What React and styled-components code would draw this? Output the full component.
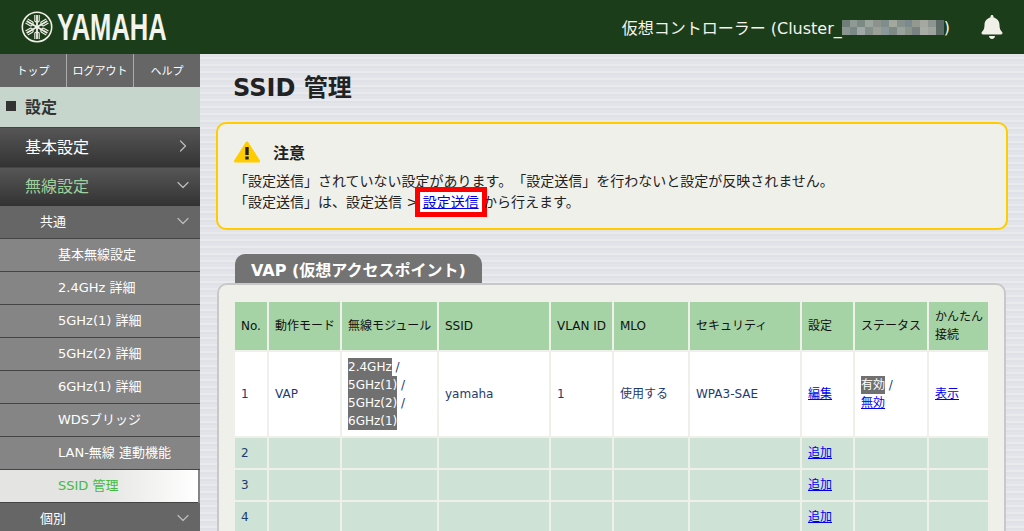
import React from "react";
import styled, { createGlobalStyle } from "styled-components";
import { ChevronDown, ChevronRight } from "lucide-react";
import { FaBell } from "react-icons/fa";

const FONT = `"DejaVu Sans", "Noto Sans CJK JP", sans-serif`;

const MOSAIC = [
	"#6f7f78", "#8f9a94", "#7c8a86", "#9aa5a0", "#8d938c", "#7f8d8c", "#a3a89f", "#86908c", "#7b8a8f", "#93998f", "#a5a8a0", "#8d9590", "#5d6a68",
	"#8a9590", "#7a8886", "#a0a8a6", "#858f8a", "#9a9f98", "#8b9899", "#7f8a86", "#9aa29c", "#8a9488", "#7a8284", "#a8aca6", "#9ea39e", "#5e6c68",
];

function Emblem() {
	return (
		<svg width="32" height="32" viewBox="0 0 32 32" fill="none" stroke="#f0f0e8">
			<circle cx="16" cy="16" r="14.7" strokeWidth="1.6" />
			{[0, 60, 120, 180, 240, 300].map((a) => (
				<g key={a} transform={`rotate(${a} 16 16)`}>
					<path d="M16 16V4" strokeWidth="1.8" />
					<path d="M13.800 4V9.500Q13.800 11 16 11Q18.200 11 18.200 9.500V4" strokeWidth="1.1" />
				</g>
			))}
		</svg>
	);
}

function Warning() {
	return (
		<svg width="26" height="22" viewBox="0 0 26 22">
			<path d="M13 2L24.500 20H1.500Z" fill="#ffcc00" stroke="#ffcc00" strokeWidth="3" strokeLinejoin="round" />
			<rect x="11.300" y="6" width="3.400" height="8" fill="#222" />
			<rect x="11.300" y="15.500" width="3.400" height="3" fill="#222" />
		</svg>
	);
}

const SUB_ITEMS = ["基本無線設定", "2.4GHz 詳細", "5GHz(1) 詳細", "5GHz(2) 詳細", "6GHz(1) 詳細", "WDSブリッジ", "LAN-無線 連動機能"];

const COLUMNS = [32, 71, 95, 110, 61, 74, 110, 51, 72, 59];
const HEADERS = ["No.", "動作モード", "無線モジュール", "SSID", "VLAN ID", "MLO", "セキュリティ", "設定", "ステータス", "かんたん接続"];

export default function App() {
	return (
		<>
			<GlobalStyle />
			<Page>
				<Header>
					<Logo>
						<Emblem />
						<LogoText>YAMAHA</LogoText>
					</Logo>
					<Controller>
						仮想コントローラー (Cluster_
						<Mosaic>
							{MOSAIC.map((c, i) => (
								<MosaicCell key={i} $color={c} />
							))}
						</Mosaic>
						)
					</Controller>
					<Bell>
						<FaBell size={24} />
					</Bell>
				</Header>
				<Body>
					<Sidebar>
						<TopNav>
							<TopLink>トップ</TopLink>
							<TopLink>ログアウト</TopLink>
							<TopLink>ヘルプ</TopLink>
						</TopNav>
						<SectionHead>
							<Square />
							設定
						</SectionHead>
						<MainItem>
							基本設定
							<ChevronRight size={20} strokeWidth={1.5} />
						</MainItem>
						<MainItem $open>
							無線設定
							<ChevronDown size={20} strokeWidth={1.5} />
						</MainItem>
						<GroupItem>
							共通
							<ChevronDown size={20} strokeWidth={1.5} />
						</GroupItem>
						{SUB_ITEMS.map((item) => (
							<SubItem key={item}>{item}</SubItem>
						))}
						<SubItem $active>SSID 管理</SubItem>
						<GroupItem>
							個別
							<ChevronDown size={20} strokeWidth={1.5} />
						</GroupItem>
					</Sidebar>
					<Main>
						<Title>SSID 管理</Title>
						<Notice>
							<NoticeHead>
								<Warning />
								<strong>注意</strong>
							</NoticeHead>
							<NoticeLine>「設定送信」されていない設定があります。「設定送信」を行わないと設定が反映されません。</NoticeLine>
							<NoticeLine>
								「設定送信」は、設定送信 &gt; <Highlight><a href="#send">設定送信</a></Highlight> から行えます。
							</NoticeLine>
						</Notice>
						<Tab>VAP (仮想アクセスポイント)</Tab>
						<Panel>
							<Table>
								<colgroup>
									{COLUMNS.map((w, i) => (
										<col key={i} width={w} />
									))}
								</colgroup>
								<thead>
									<tr>
										{HEADERS.map((h) => (
											<th key={h}>{h}</th>
										))}
									</tr>
								</thead>
								<tbody>
									<tr>
										<td>1</td>
										<td>VAP</td>
										<td>
											<Active>2.4GHz</Active> / <Active>5GHz(1)</Active> / <Active>5GHz(2)</Active> / <Active>6GHz(1)</Active>
										</td>
										<td>yamaha</td>
										<td>1</td>
										<td>使用する</td>
										<td>WPA3-SAE</td>
										<td><a href="#edit">編集</a></td>
										<td>
											<Active>有効</Active> /<br />
											<a href="#off">無効</a>
										</td>
										<td><a href="#show">表示</a></td>
									</tr>
									{[2, 3, 4].map((n) => (
										<EmptyRow key={n}>
											<td>{n}</td>
											<td />
											<td />
											<td />
											<td />
											<td />
											<td />
											<td><a href="#add">追加</a></td>
											<td />
											<td />
										</EmptyRow>
									))}
								</tbody>
							</Table>
						</Panel>
					</Main>
				</Body>
			</Page>
		</>
	);
}

const GlobalStyle = createGlobalStyle`
	html, body {
		margin: 0;
		height: 100%;
		overflow: hidden;
	}
	body {
		font-family: ${FONT};
		font-size: 12px;
		background: #e4e6ea;
		text-spacing-trim: space-all;
	}
`;

const Page = styled.div`
	height: 531px;
	overflow: hidden;
`;

const Header = styled.header`
	display: flex;
	align-items: center;
	height: 54px;
	padding: 0 20px 0 21px;
	background: #1c3d1a;
	color: #f4f4ee;
`;

const Logo = styled.div`
	display: flex;
	align-items: center;
	gap: 4px;
`;

const LogoText = styled.span`
	font-family: "Liberation Sans", sans-serif;
	font-size: 37px;
	font-weight: 700;
	line-height: 1;
	transform: scaleX(0.69);
	transform-origin: left center;
`;

const Controller = styled.div`
	display: flex;
	align-items: center;
	margin-left: auto;
	margin-right: 30px;
	font-size: 16px;
`;

const Mosaic = styled.span`
	display: grid;
	grid-template-columns: repeat(13, 7.85px);
	grid-auto-rows: 7.5px;
`;

const MosaicCell = styled.span`
	background: ${(p) => p.$color};
`;

const Bell = styled.div`
	display: flex;
	color: #f0f0e8;
`;

const Body = styled.div`
	display: flex;
	align-items: flex-start;
`;

const Sidebar = styled.nav`
	flex: 0 0 200px;
	background: #858585;
	color: #fff;
`;

const TopNav = styled.div`
	display: grid;
	grid-template-columns: 66px 67px 67px;
	height: 33px;
	background: #666;
`;

const TopLink = styled.div`
	display: flex;
	align-items: center;
	justify-content: center;
	padding-bottom: 2px;
	font-size: 11px;

	& + & {
		border-left: 1px solid #aaa;
	}
`;

const SectionHead = styled.div`
	display: flex;
	align-items: center;
	gap: 9px;
	box-sizing: border-box;
	height: 40px;
	padding: 0 0 2px 6px;
	background: #c7d6cd;
	color: #333;
	font-size: 16px;
	font-weight: 700;
`;

const Square = styled.span`
	width: 10px;
	height: 10px;
	background: #333;
`;

const MainItem = styled.div`
	display: flex;
	align-items: center;
	justify-content: space-between;
	box-sizing: border-box;
	height: 39.500px;
	padding: 0 7px 3px 25px;
	background: linear-gradient(#565656, #333);
	border-top: 1px solid #444;
	color: ${(p) => (p.$open ? "#9ed09e" : "#fff")};
	font-size: 16px;

	svg {
		color: #bbb;
	}
`;

const GroupItem = styled.div`
	display: flex;
	align-items: center;
	justify-content: space-between;
	box-sizing: border-box;
	height: 33px;
	padding: 0 7px 3px 40px;
	background: #666;
	border-bottom: 1px solid #444;
	font-size: 13px;

	svg {
		color: #bbb;
	}
`;

const SubItem = styled.div`
	display: flex;
	align-items: center;
	box-sizing: border-box;
	height: 33px;
	padding: 0 0 3px 58px;
	border-bottom: 1px solid #444;
	font-size: 13px;
	${(p) =>
		p.$active &&
		`
		margin-right: 2px;
		background: linear-gradient(90deg, #e4e4e2 50%, #fff);
		color: #44bb44;
	`}
`;

const Main = styled.main`
	flex: 1;
	height: 477px;
	padding: 0 16px;
	background: repeating-linear-gradient(180deg, #e2e4e9 0 3px, #e8eaee 3px 5px, #dfe1e6 5px 7px);
`;

const Title = styled.h1`
	box-sizing: border-box;
	height: 49px;
	margin: 0;
	padding: 19px 0 0 17px;
	color: #222;
	font-size: 24px;
	font-weight: 700;
	line-height: 30px;
`;

const Notice = styled.section`
	box-sizing: border-box;
	height: 108px;
	margin: 19px 0 24px;
	padding: 14px 16px 0;
	background: #f0f0ea;
	border: 2px solid #ffcc00;
	border-radius: 10px;
	color: #222;
	font-size: 14px;
`;

const NoticeHead = styled.div`
	display: flex;
	align-items: center;
	gap: 13px;
	box-sizing: border-box;
	height: 33px;
	padding-bottom: 5px;
	font-size: 16px;
`;

const NoticeLine = styled.p`
	margin: 0;
	line-height: 21px;
`;

const Highlight = styled.span`
	display: inline-block;
	margin: 0 -3px;
	padding: 0 3px;
	line-height: 20px;
	background: #fff;
	outline: 5px solid #f00;
`;

const Tab = styled.div`
	display: inline-flex;
	align-items: center;
	height: 29px;
	margin-left: 19px;
	padding: 0 16px;
	background: #737373;
	border-radius: 10px 10px 0 0;
	color: #fff;
	font-size: 16px;
	font-weight: 700;
	vertical-align: bottom;
`;

const Panel = styled.section`
	box-sizing: border-box;
	width: 789px;
	margin-left: 1px;
	padding: 15px 14px;
	background: #f0f0ea;
	border: 2px solid #c8c8c8;
	border-radius: 10px;
`;

const Table = styled.table`
	table-layout: fixed;
	width: 757px;
	border-spacing: 2px;
	border-collapse: separate;
	color: #1d3c6e;
	font-size: 12px;
	line-height: 18px;

	th {
		box-sizing: border-box;
		height: 48px;
		padding: 0 3px 0 6px;
		background: #a5d3a5;
		color: #111;
		font-weight: 400;
		text-align: left;
	}

	td {
		box-sizing: border-box;
		height: 84px;
		padding: 0 3px 0 6px;
		background: #fff;
	}
`;

const EmptyRow = styled.tr`
	td {
		height: 30px;
		background: #cee2d6;
	}
`;

const Active = styled.span`
	display: inline-block;
	background: #707070;
	color: #fff;
`;
